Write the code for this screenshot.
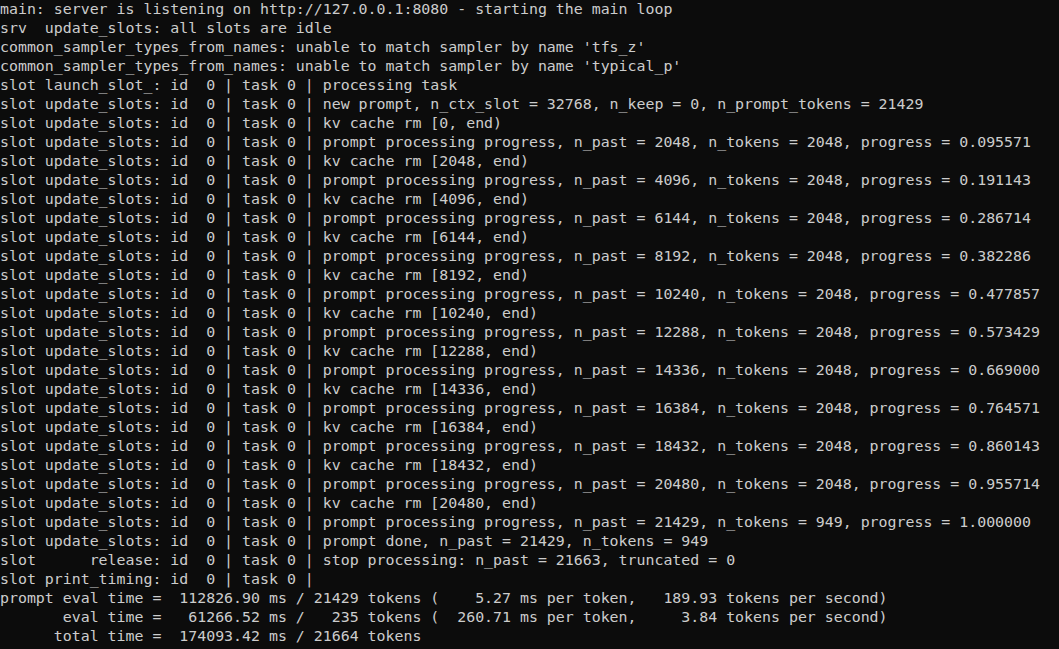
import React from 'react';

const slot = 'slot update_slots: id  0 | task 0 | ';

const steps: [string, string][] = [
    ['2048', '0.095571'],
    ['4096', '0.191143'],
    ['6144', '0.286714'],
    ['8192', '0.382286'],
    ['10240', '0.477857'],
    ['12288', '0.573429'],
    ['14336', '0.669000'],
    ['16384', '0.764571'],
    ['18432', '0.860143'],
    ['20480', '0.955714'],
];

const lines: string[] = [
    'main: server is listening on http://127.0.0.1:8080 - starting the main loop',
    'srv  update_slots: all slots are idle',
    "common_sampler_types_from_names: unable to match sampler by name 'tfs_z'",
    "common_sampler_types_from_names: unable to match sampler by name 'typical_p'",
    'slot launch_slot_: id  0 | task 0 | processing task',
    slot + 'new prompt, n_ctx_slot = 32768, n_keep = 0, n_prompt_tokens = 21429',
    slot + 'kv cache rm [0, end)',
    ...steps.flatMap(([past, prog]) => [
        slot + `prompt processing progress, n_past = ${past}, n_tokens = 2048, progress = ${prog}`,
        slot + `kv cache rm [${past}, end)`,
    ]),
    slot + 'prompt processing progress, n_past = 21429, n_tokens = 949, progress = 1.000000',
    slot + 'prompt done, n_past = 21429, n_tokens = 949',
    'slot      release: id  0 | task 0 | stop processing: n_past = 21663, truncated = 0',
    'slot print_timing: id  0 | task 0 |',
    'prompt eval time =  112826.90 ms / 21429 tokens (    5.27 ms per token,   189.93 tokens per second)',
    '       eval time =   61266.52 ms /   235 tokens (  260.71 ms per token,     3.84 tokens per second)',
    '      total time =  174093.42 ms / 21664 tokens',
];

export default function App() {
    return (
        <div className="w-[1059px] h-[649px] overflow-hidden bg-[#0c0c0c] text-[#cccccc] font-['DejaVu_Sans_Mono','Liberation_Mono',monospace] text-[14.9px] leading-[19px]">
            {lines.map((line, i) => (
                <div key={i} className="whitespace-pre h-[19px]">
                    {line}
                </div>
            ))}
        </div>
    );
}
